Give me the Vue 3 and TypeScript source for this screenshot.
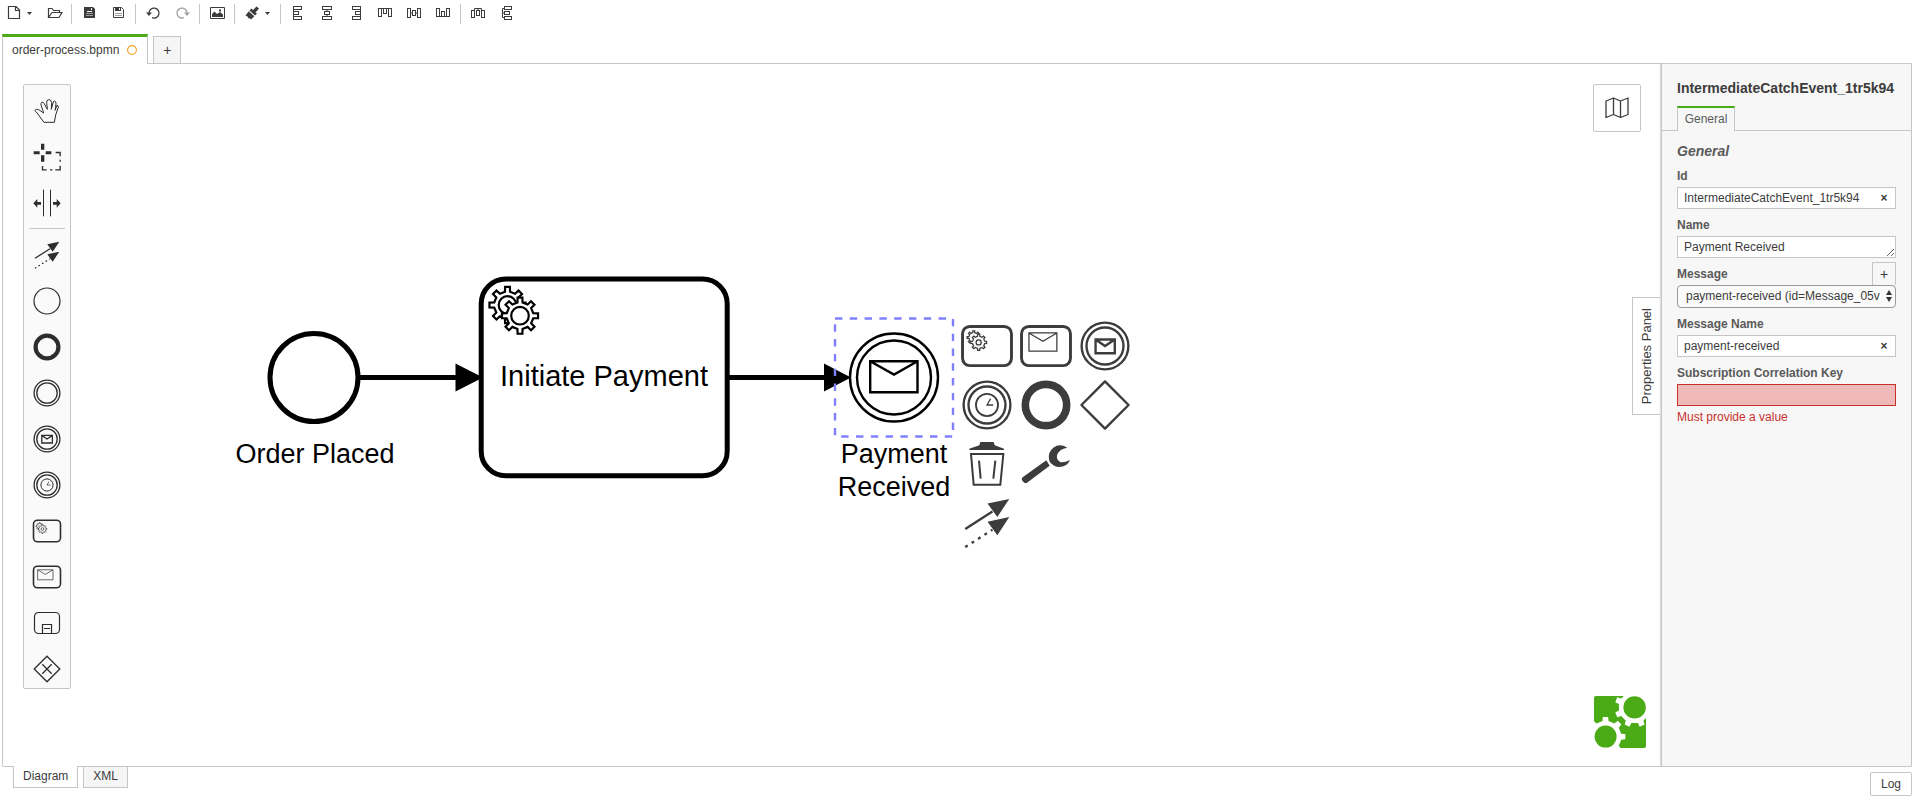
<script setup lang="ts">
import { ref } from 'vue'

interface Shape { x: number; y: number; w: number; h: number }
interface AlignTool { label: string; boxes: Shape[]; lines: string }
interface Entry { icon: string; label: string }

function box(x: number, y: number, w: number, h: number): Shape {
  return { x, y, w, h }
}

/** Outline of a cog with square teeth, centred on (cx, cy). */
function gear(cx: number, cy: number, outer: number, root: number, turn = 0, teeth = 8): string {
  const step = (Math.PI * 2) / teeth
  const points: string[] = []
  for (let i = 0; i < teeth; i++) {
    const a = i * step + turn
    const corners: [number, number][] = [
      [root, a - step * 0.24],
      [outer, a - step * 0.17],
      [outer, a + step * 0.17],
      [root, a + step * 0.24],
    ]
    for (const [r, t] of corners) {
      points.push(`${(cx + r * Math.cos(t)).toFixed(2)} ${(cy + r * Math.sin(t)).toFixed(2)}`)
    }
  }
  return `M${points.join('L')}Z`
}

const alignTools: AlignTool[] = [
  { label: 'Align left', boxes: [box(5, 3, 8, 3), box(5, 8, 5, 3), box(5, 13, 8, 3)], lines: 'M5.5 3V17' },
  { label: 'Align center', boxes: [box(5, 3, 9, 3), box(7, 8, 5, 3), box(5, 13, 9, 3)], lines: 'M10 6V8M10 11V13' },
  { label: 'Align right', boxes: [box(6, 3, 8, 3), box(9, 8, 5, 3), box(6, 13, 8, 3)], lines: 'M14.5 3V17' },
  { label: 'Align top', boxes: [box(3, 5, 3, 8), box(8, 5, 3, 5), box(13, 5, 3, 8)], lines: 'M3 5.5H17' },
  { label: 'Align middle', boxes: [box(3, 5, 3, 9), box(8, 7, 3, 5), box(13, 5, 3, 9)], lines: 'M6 10H8M11 10H13' },
  { label: 'Align bottom', boxes: [box(3, 5, 3, 8), box(8, 8, 3, 5), box(13, 5, 3, 8)], lines: 'M3 13.5H17' },
]
const distributeTools: AlignTool[] = [
  { label: 'Distribute horizontally', boxes: [box(3, 7, 3, 7), box(8, 7, 3, 5), box(13, 7, 3, 7)], lines: 'M6.5 7V5.5H13.5V7M10 5V7' },
  { label: 'Distribute vertically', boxes: [box(7, 3, 7, 3), box(7, 8, 5, 3), box(7, 13, 7, 3)], lines: 'M7 5.5H5.5V14.5H7M5 10H7' },
]

const tools: Entry[] = [
  { icon: 'hand', label: 'Hand tool' },
  { icon: 'lasso', label: 'Lasso tool' },
  { icon: 'space', label: 'Space tool' },
]
const elements: Entry[] = [
  { icon: 'connect', label: 'Connect' },
  { icon: 'start', label: 'Start event' },
  { icon: 'end', label: 'End event' },
  { icon: 'intermediate', label: 'Intermediate event' },
  { icon: 'message', label: 'Message event' },
  { icon: 'timer', label: 'Timer event' },
  { icon: 'service', label: 'Service task' },
  { icon: 'receive', label: 'Receive task' },
  { icon: 'subprocess', label: 'Subprocess' },
  { icon: 'exclusive', label: 'Exclusive gateway' },
]
const padRows: Entry[][] = [
  [
    { icon: 'service', label: 'Append service task' },
    { icon: 'receive', label: 'Append receive task' },
    { icon: 'message', label: 'Append message event' },
  ],
  [
    { icon: 'timer', label: 'Append timer event' },
    { icon: 'end', label: 'Append end event' },
    { icon: 'gateway', label: 'Append gateway' },
  ],
  [
    { icon: 'trash', label: 'Remove' },
    { icon: 'wrench', label: 'Change type' },
  ],
  [{ icon: 'connect', label: 'Connect' }],
]

const elementId = ref('IntermediateCatchEvent_1tr5k94')
const elementName = ref('Payment Received')
const messageRef = ref('payment-received (id=Message_05v')
const messageName = ref('payment-received')
const correlationKey = ref('')
</script>

<template>
  <div class="modeler">
    <svg class="sprite" aria-hidden="true">
      <symbol id="hand" viewBox="0 0 96 96">
        <path d="M39 82H70L74 60L82 36Q82 30 78 31L72 46L73 44L75 26Q75 19 71 18Q66 18 66 24L61 43L62 22Q60 13 53 14Q46 15 47 22L49 43L39 25Q36 19 32 22Q29 25 30 30L38 54L23 44Q16 41 12 46Q12 49 16 51Z" class="s3" />
      </symbol>
      <symbol id="lasso" viewBox="0 0 96 96">
        <path d="M30 8H40V26H30ZM30 43H40V62H30ZM8 31H26V40H8ZM44 31H61V40H44Z" class="f" />
        <path d="M74 34.500H87.500V46M87.500 56V62M87.500 74V86.500H73M64 86.500H57M47 86.500H34.500V75" class="s4" />
      </symbol>
      <symbol id="space" viewBox="0 0 96 96">
        <path d="M37.500 8V88M58.500 8V88" class="s3" />
        <path d="M7 49L19 36V45H30V53H19V62ZM89 49L77 36V45H66V53H77V62Z" class="f" />
      </symbol>
      <symbol id="connect" viewBox="0 0 32 32">
        <path d="M4 19.300L19 9.700" class="s" />
        <path d="M4 29.300L19 19.700" class="s" stroke-dasharray="1.600 2.600" />
        <path d="M28.300 2.700L16.300 5.300L21.700 12.700ZM28.300 12.700L16.300 15.300L21.700 22.700Z" class="f" />
      </symbol>
      <symbol id="start" viewBox="0 0 32 32"><circle cx="16" cy="16" r="13" class="s2" /></symbol>
      <symbol id="end" viewBox="0 0 32 32"><circle cx="16" cy="16" r="11.400" class="thick" /></symbol>
      <symbol id="intermediate" viewBox="0 0 32 32">
        <circle cx="16" cy="16" r="12.900" class="s" /><circle cx="16" cy="16" r="10.200" class="s" />
      </symbol>
      <symbol id="message" viewBox="0 0 32 32">
        <circle cx="16" cy="16" r="12.900" class="s" /><circle cx="16" cy="16" r="10.200" class="s" />
        <path d="M10.800 12.400H21.400V20H10.800ZM10.800 12.400L16 16L21.400 12.400" class="s" />
      </symbol>
      <symbol id="timer" viewBox="0 0 32 32">
        <circle cx="16" cy="16" r="12.900" class="s" /><circle cx="16" cy="16" r="10.200" class="s" />
        <circle cx="16" cy="16" r="6.100" class="s1" /><path d="M18 12.500L16 16H19.400" class="thin" />
      </symbol>
      <symbol id="service" viewBox="0 0 32 32">
        <rect x="2.500" y="5.200" width="27" height="21.600" rx="4" class="bold" />
        <path :d="gear(8.7, 11.3, 3.7, 2.7)" class="thin" />
        <path :d="gear(11.400, 14, 4.400, 3.400)" class="thin knock" />
        <circle cx="11.400" cy="14" r="1.400" class="thin" />
      </symbol>
      <symbol id="receive" viewBox="0 0 32 32">
        <rect x="2.500" y="5.200" width="27" height="21.600" rx="4" class="bold" />
        <path d="M6.600 8.800H22V18.800H6.600ZM6.600 8.800L14.300 13.400L22 8.800" class="thin" />
      </symbol>
      <symbol id="subprocess" viewBox="0 0 32 32">
        <rect x="3.500" y="5.500" width="25" height="21" rx="4" class="s2" />
        <path d="M11.500 26.500V17.500H20.500V26.500M13 21.500H19" class="s2" />
      </symbol>
      <symbol id="exclusive" viewBox="0 0 32 32">
        <path d="M16 3.200L28.800 16L16 28.800L3.200 16ZM11.300 11.300L20.700 20.700M20.700 11.300L11.300 20.700" class="s" />
      </symbol>
      <symbol id="gateway" viewBox="0 0 32 32"><path d="M16 3L29 16L16 29L3 16Z" class="s" stroke-linejoin="round" /></symbol>
      <symbol id="trash" viewBox="0 0 174 174">
        <path d="M34 45V41L64 31L67 21H107L110 31L138 41V45Z" class="f" />
        <path d="M39 57H136L127 149H47ZM63 77L68 131M112 77L106 131" class="s6" />
      </symbol>
      <symbol id="wrench" viewBox="0 0 174 174">
        <path d="M151 38Q128 24 109 38Q92 52 96 73L98 80Q108 93 124 96Q150 97 159 75Q145 83 131 82Q118 76 120 61Q126 42 151 38Z" class="f" />
        <path d="M88 76L98 92L34 140Q28 147 22 143Q12 136 15 128Z" class="f" />
      </symbol>
    </svg>

    <header class="toolbar">
      <button type="button" class="tool wide" aria-label="Create diagram">
        <svg class="glyph" viewBox="0 0 21 21"><path d="M4.500 3.500H12L15.500 7V15.500H4.500ZM11.500 3.500V7.500H15.500" class="s2" /></svg>
        <svg class="caret" viewBox="0 0 5 3"><path d="M0 0H5L2.500 3Z" class="f" /></svg>
      </button>
      <button type="button" class="tool" aria-label="Open diagram">
        <svg class="glyph" viewBox="0 0 21 21"><path d="M4.500 14.500V5.500H8L9.500 7.500H15.500V9.500M4.500 14.500L8 9.500H18L15 14.500Z" class="s2" /></svg>
      </button>
      <span class="divider"></span>
      <button type="button" class="tool" aria-label="Save">
        <svg class="glyph" viewBox="0 0 21 21"><path d="M5 4H14L16 6V15H5Z" class="f" /><path d="M7 10.500H14M7 12.500H14" class="cut faint" /><path d="M8 8.500H13M12.500 5V7" class="cut" /></svg>
      </button>
      <button type="button" class="tool" aria-label="Save as">
        <svg class="glyph" viewBox="0 0 21 21"><path d="M5.500 4.500H13.500L15.500 6.500V14.500H5.500Z" class="s1" /><path d="M7 4H13V8H7Z" class="f" /><path d="M11.500 5V7" class="cut" /><path d="M7 10.500H14M7 12.500H14" class="faint" /></svg>
      </button>
      <span class="divider"></span>
      <button type="button" class="tool" aria-label="Undo">
        <svg class="glyph" viewBox="0 0 21 21"><path d="M6 10A5 5 0 1 1 9 14.700" class="s" /><path d="M3 9.500H9L6 13Z" class="f" /></svg>
      </button>
      <button type="button" class="tool muted" aria-label="Redo" disabled>
        <svg class="glyph" viewBox="0 0 21 21"><path d="M15 10A5 5 0 1 0 12 14.700" class="s" /><path d="M12 9.500H18L15 13Z" class="f" /></svg>
      </button>
      <span class="divider"></span>
      <button type="button" class="tool" aria-label="Export as image">
        <svg class="glyph" viewBox="0 0 21 21"><path d="M3.500 4.500H17.500V15.500H3.500Z" class="s1" /><path d="M5 14V11L7.500 8.500L10 11L13 9L16 11.500V14ZM12 6.500H14V8.500H12Z" class="f" /></svg>
      </button>
      <span class="divider"></span>
      <button type="button" class="tool wide" aria-label="Set color">
        <svg class="glyph" viewBox="0 0 21 21"><path d="M14.500 3.500L17 5.500L13.500 9.500L15 10.500L13 12.500L7.500 7.500L9.500 5.500L11 7Z" class="f" /><path d="M6.800 8.200L12.300 13.200L9 16.500L7.500 15L6.500 15.500L5.500 13.500L3.500 12.500Z" class="f" /></svg>
        <svg class="caret" viewBox="0 0 5 3"><path d="M0 0H5L2.500 3Z" class="f" /></svg>
      </button>
      <span class="divider"></span>
      <button v-for="t in alignTools" :key="t.label" type="button" class="tool" :aria-label="t.label">
        <svg class="glyph" viewBox="0 0 21 21">
          <rect v-for="(b, i) in t.boxes" :key="i" :x="b.x + 0.5" :y="b.y + 0.5" :width="b.w" :height="b.h" class="s1" />
          <path :d="t.lines" class="s1" />
        </svg>
      </button>
      <span class="divider"></span>
      <button v-for="t in distributeTools" :key="t.label" type="button" class="tool" :aria-label="t.label">
        <svg class="glyph" viewBox="0 0 21 21">
          <rect v-for="(b, i) in t.boxes" :key="i" :x="b.x + 0.5" :y="b.y + 0.5" :width="b.w" :height="b.h" class="s1" />
          <path :d="t.lines" class="s1" />
        </svg>
      </button>
    </header>

    <nav class="file-tabs">
      <button type="button" class="file-tab">
        order-process.bpmn
        <svg class="dirty" viewBox="0 0 10 10"><circle cx="5" cy="5" r="4.400" /></svg>
      </button>
      <button type="button" class="new-tab" aria-label="New tab">+</button>
    </nav>

    <main class="workspace">
      <section class="canvas">
        <svg class="diagram" role="img" aria-label="Order process">
          <g transform="translate(-3 -64)">
            <circle cx="314" cy="377.500" r="44" class="heavy" />
            <path d="M360 377.500H460" class="heavy" />
            <path d="M455.500 363.500L483 377.500L455.500 391.500Z" />
            <rect x="481.200" y="279" width="246" height="196.800" rx="24.600" class="heavy" />
            <path :d="gear(507.500, 305, 18.200, 13.500)" class="mark" />
            <circle cx="507.500" cy="305" r="8.800" class="mark" />
            <path :d="gear(520, 315.700, 18.200, 13.500)" class="mark" />
            <circle cx="520" cy="315.700" r="8.800" class="mark" />
            <path d="M728 377.500H828" class="heavy" />
            <path d="M824 363.500L851 377.500L824 391.500Z" />
            <circle cx="894" cy="377.500" r="44" class="event" />
            <circle cx="894" cy="377.500" r="37" class="event" />
            <path d="M870.200 361.200H917.500V392.300H870.200ZM870.200 361.200L894 374.500L917.500 361.200" class="event" />
            <rect x="835" y="318.500" width="118" height="118" class="selection" />
            <g class="caption">
              <text x="315" y="463">Order Placed</text>
              <text x="604" y="386" class="task-name">Initiate Payment</text>
              <text x="894" y="463">Payment</text>
              <text x="894" y="496">Received</text>
            </g>
          </g>
        </svg>

        <div class="palette">
          <button v-for="e in tools" :key="e.icon" type="button" class="entry" :aria-label="e.label">
            <svg><use :href="'#' + e.icon" /></svg>
          </button>
          <hr />
          <button v-for="e in elements" :key="e.icon" type="button" class="entry" :aria-label="e.label">
            <svg><use :href="'#' + e.icon" /></svg>
          </button>
        </div>

        <div class="context-pad">
          <div v-for="(row, r) in padRows" :key="r" class="pad-row">
            <button v-for="e in row" :key="e.icon" type="button" :aria-label="e.label">
              <svg><use :href="'#' + e.icon" /></svg>
            </button>
          </div>
        </div>

        <button type="button" class="minimap" aria-label="Toggle minimap">
          <svg viewBox="0 0 24 22"><path d="M1 4L8.500 1L15.500 4L23 1V17.500L15.500 20.500L8.500 17.500L1 20.500ZM8.500 1V17.500M15.500 4V20.500" /></svg>
        </button>

        <a class="logo" href="#" aria-label="bpmn.io">
          <svg viewBox="0 0 52 52">
            <rect width="52" height="52" rx="2" class="leaf" />
            <path :d="gear(40.600, 11.300, 20, 16, Math.PI / 8)" class="gap" />
            <path :d="gear(11.500, 40.700, 20, 16)" class="gap" />
            <path d="M40 0H52V12H40ZM0 40H12V52H0Z" class="gap" />
            <circle cx="40.600" cy="11.400" r="11.200" class="leaf" />
            <circle cx="11.600" cy="40.600" r="11" class="leaf" />
          </svg>
        </a>

        <button type="button" class="panel-toggle"><span>Properties Panel</span></button>
      </section>

      <aside class="panel">
        <h1>IntermediateCatchEvent_1tr5k94</h1>
        <div class="panel-tabs"><button type="button">General</button></div>
        <form class="fields" @submit.prevent>
          <h2>General</h2>
          <div class="field">
            <label for="el-id">Id</label>
            <div class="control">
              <input id="el-id" v-model="elementId" type="text" />
              <button type="button" class="clear" aria-label="Clear id">×</button>
            </div>
          </div>
          <div class="field">
            <label for="el-name">Name</label>
            <textarea id="el-name" v-model="elementName" rows="1"></textarea>
          </div>
          <div class="field">
            <div class="label-row">
              <label for="el-message">Message</label>
              <button type="button" class="add" aria-label="Add message">+</button>
            </div>
            <div class="control">
              <select id="el-message" v-model="messageRef">
                <option>payment-received (id=Message_05v</option>
              </select>
              <svg class="updown" viewBox="0 0 6 12"><path d="M0 5L3 0L6 5ZM0 7H6L3 12Z" /></svg>
            </div>
          </div>
          <div class="field">
            <label for="msg-name">Message Name</label>
            <div class="control">
              <input id="msg-name" v-model="messageName" type="text" />
              <button type="button" class="clear" aria-label="Clear message name">×</button>
            </div>
          </div>
          <div class="field invalid">
            <label for="corr-key">Subscription Correlation Key</label>
            <input id="corr-key" v-model="correlationKey" type="text" aria-describedby="corr-error" />
            <p id="corr-error">Must provide a value</p>
          </div>
        </form>
      </aside>
    </main>

    <footer class="bottom">
      <button type="button" class="view active">Diagram</button>
      <button type="button" class="view">XML</button>
      <button type="button" class="log">Log</button>
    </footer>
  </div>
</template>

<style>
body {
  margin: 0;
  background: #fff;
}
</style>

<style scoped>
.modeler {
  --line: #c6c6c6;
  --ink: #3c3c3c;
  display: flex;
  flex-direction: column;
  height: 100vh;
  min-height: 760px;
  font: 12px/14px "Liberation Sans", Arial, sans-serif;
  color: var(--ink);
}
* { box-sizing: border-box; }
button {
  margin: 0;
  padding: 0;
  border: 0;
  background: none;
  color: inherit;
  font: inherit;
}
svg { display: block; }
.sprite { position: absolute; width: 0; height: 0; }

.s, .s1, .s2, .s3, .s4, .s6, .bold, .thin, .thick, .faint { fill: none; stroke: currentColor; stroke-width: 1.3; }
.s1 { stroke-width: 1; }
.s2 { stroke-width: 1.2; }
.s3 { stroke-width: 3; }
.s4 { stroke-width: 4; }
.s6 { stroke-width: 6; }
.bold { stroke-width: 1.6; }
.thin { stroke-width: 0.7; }
.thick { stroke-width: 4.2; }
.faint { stroke-width: 1; opacity: 0.5; }
.f { fill: currentColor; }
.knock { fill: #fbfbfb; }
.cut { fill: none; stroke: #fff; stroke-width: 1; }

.toolbar { display: flex; align-items: center; height: 27px; flex: none; }
.tool { display: flex; align-items: center; width: 29px; height: 27px; padding-left: 4px; }
.tool.wide { width: 40px; }
.muted { color: #a0a0a0; }
.glyph { width: 21px; height: 21px; flex: none; }
.caret { width: 5px; height: 3px; margin-left: 2px; }
.divider { width: 1px; height: 20px; margin: 0 3px 0 2px; background: var(--line); }

.file-tabs { display: flex; align-items: flex-end; flex: none; height: 36px; padding-left: 2px; gap: 5px; }
.file-tab {
  position: relative;
  z-index: 1;
  display: flex;
  align-items: center;
  gap: 8px;
  height: 30px;
  margin-bottom: -1px;
  padding: 0 10px 2px 9px;
  border: 1px solid var(--line);
  border-top: 3px solid #4aab17;
  border-bottom: 0;
  background: #fff;
}
.dirty { width: 10px; height: 10px; }
.dirty circle { fill: none; stroke: #f6a32c; stroke-width: 1.2; }
.new-tab { width: 28px; height: 27px; border: 1px solid var(--line); border-bottom: 0; background: #f5f5f5; font-size: 14px; }

.workspace {
  display: flex;
  flex: 1;
  min-height: 0;
  margin: 0 5px 0 2px;
  border: 1px solid var(--line);
  border-radius: 0 0 1px 1px;
}
.canvas { position: relative; flex: 1; min-width: 0; overflow: hidden; background: #fff; }
.diagram { position: absolute; width: 100%; height: 100%; }
.heavy, .event, .mark { fill: none; stroke: #000; stroke-width: 5; }
.event { stroke-width: 2.4; }
.mark { fill: #fff; stroke-width: 2.2; }
.selection { fill: none; stroke: #8080ff; stroke-width: 2.4; stroke-dasharray: 7.4 7.4; }
.caption { font-size: 27px; fill: #000; text-anchor: middle; }
.task-name { font-size: 29px; }

.palette {
  position: absolute;
  top: 20px;
  left: 20px;
  display: flex;
  flex-direction: column;
  gap: 10px;
  width: 48px;
  padding: 8px 0 1px;
  border: 1px solid var(--line);
  border-radius: 2px;
  background: #fafafa;
  color: #2d2d2d;
}
.palette hr { width: 36px; height: 1px; margin: -3px auto -2px; border: 0; background: var(--line); }
.entry { display: flex; align-items: center; justify-content: center; height: 36px; }
.entry svg { width: 32px; height: 32px; }

.context-pad { position: absolute; top: 252px; left: 954px; color: #3c3c3c; }
.pad-row { display: flex; }
.pad-row button { display: flex; align-items: center; justify-content: center; width: 59px; height: 59px; }
.pad-row svg { width: 58px; height: 58px; }

.minimap {
  position: absolute;
  top: 20px;
  right: 20px;
  display: flex;
  align-items: center;
  justify-content: center;
  width: 48px;
  height: 48px;
  border: 1px solid var(--line);
  border-radius: 2px;
  background: #fff;
}
.minimap svg { width: 24px; height: 22px; }
.minimap path { fill: none; stroke: #3c3c3c; stroke-width: 1.3; stroke-linejoin: round; }
.logo { position: absolute; right: 15px; bottom: 18px; }
.logo svg { width: 52px; height: 52px; }
.leaf { fill: #4aab17; }
.gap { fill: #fff; }

.panel-toggle {
  position: absolute;
  top: 233px;
  right: 0;
  display: flex;
  align-items: center;
  justify-content: center;
  width: 29px;
  height: 118px;
  border: 1px solid var(--line);
  border-right: 0;
  background: #fff;
  font-size: 13px;
}
.panel-toggle span { writing-mode: vertical-rl; transform: rotate(180deg); }

.panel {
  position: relative;
  width: 250px;
  flex: none;
  border-left: 1px solid var(--line);
  background: #f7f7f7;
  box-shadow: -1px 0 1px #ddd;
}
.panel h1 { margin: 15px 0 9px 15px; font-size: 14px; line-height: 18px; }
.panel-tabs { display: flex; height: 25px; padding-left: 15px; border-bottom: 1px solid var(--line); color: #5a5a5a; }
.panel-tabs button {
  height: 25px;
  width: 58px;
  padding-bottom: 2px;
  border: 1px solid var(--line);
  border-top: 2px solid #4aab17;
  border-bottom: 0;
  background: #f7f7f7;
}
.fields { padding: 12px 15px; color: #5a5a5a; }
.fields h2 { margin: 0 0 10px; font-size: 14px; line-height: 16px; font-style: italic; }
.field { display: flex; flex-direction: column; gap: 4px; margin-bottom: 9px; }
.field label { font-weight: bold; }
.control { position: relative; display: flex; }
input, textarea, select {
  display: block;
  width: 100%;
  height: 22px;
  margin: 0;
  padding: 3px 6px;
  border: 1px solid var(--line);
  border-radius: 0;
  outline: 0;
  background: #fff;
  color: var(--ink);
  font: inherit;
}
textarea { overflow: hidden; resize: vertical; }
select { height: 23px; padding: 0 8px 1px; border-color: #999; border-radius: 4px; background: #fafafa; appearance: none; }
.updown { position: absolute; top: 5px; right: 4px; width: 6px; height: 12px; fill: #333; }
.clear { position: absolute; top: 0; right: 0; width: 24px; height: 22px; font-weight: bold; color: var(--ink); }
.label-row { display: flex; justify-content: space-between; height: 14px; }
.add { width: 24px; height: 23px; margin-top: -5px; border: 1px solid var(--line); border-bottom: 0; font-size: 14px; color: var(--ink); }
.invalid input { border-color: #c9302c; background: #f0b9b9; }
.invalid p { margin: 0; color: #c9302c; }

.bottom { display: flex; align-items: flex-start; flex: none; height: 33px; padding: 0 5px 0 13px; gap: 5px; }
.view { height: 21px; padding: 0 9px 2px; border: 1px solid var(--line); border-top: 0; background: #f5f5f5; }
.view.active { position: relative; height: 22px; margin-top: -1px; background: #fff; }
.log { width: 42px; height: 24px; margin: 5px 0 0 auto; border: 1px solid var(--line); border-radius: 2px; }
</style>
